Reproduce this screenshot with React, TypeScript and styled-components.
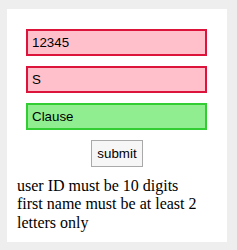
import React from "react";
import styled, { createGlobalStyle } from "styled-components";

const Global = createGlobalStyle`
  html, body { margin: 0; padding: 0; background: #eeeeee; }
  body { font-family: "Liberation Serif", "Times New Roman", serif; }
`;

const Card = styled.div`
  margin: 9px 0 0 7px;
  width: 220px;
  box-sizing: border-box;
  background: #ffffff;
  padding: 20px 10px 10px 10px;
`;

const Form = styled.form`
  display: flex;
  flex-direction: column;
  align-items: center;
  gap: 10px;
`;

const Field = styled.input<{ $valid: boolean }>`
  box-sizing: border-box;
  width: 181px;
  height: 27px;
  margin: 0 1px 0 0;
  padding: 0 4px;
  font-family: "Liberation Sans", Arial, sans-serif;
  font-size: 13.333px;
  color: #000;
  outline: none;
  border: 2px solid ${(p) => (p.$valid ? "#32cd32" : "#dc143c")};
  background: ${(p) => (p.$valid ? "#90ee90" : "#ffc0cb")};
`;

const Submit = styled.button`
  box-sizing: border-box;
  height: 27px;
  padding: 0 5px;
  font-family: "Liberation Sans", Arial, sans-serif;
  font-size: 13.333px;
  color: #000;
  background: #f6f6f6;
  border: 1px solid #a9a9a9;
  border-radius: 0;
`;

const Errors = styled.div`
  margin-top: 10px;
  font-size: 16px;
  line-height: 18.4px;
  color: #000;
`;

const ErrorLine = styled.div``;

export default function App() {
  return (
    <>
      <Global />
      <Card>
        <Form onSubmit={(e) => e.preventDefault()}>
          <Field $valid={false} defaultValue="12345" />
          <Field $valid={false} defaultValue="S" />
          <Field $valid={true} defaultValue="Clause" />
          <Submit type="submit">submit</Submit>
        </Form>
        <Errors>
          <ErrorLine>user ID must be 10 digits</ErrorLine>
          <ErrorLine>first name must be at least 2 letters only</ErrorLine>
        </Errors>
      </Card>
    </>
  );
}
